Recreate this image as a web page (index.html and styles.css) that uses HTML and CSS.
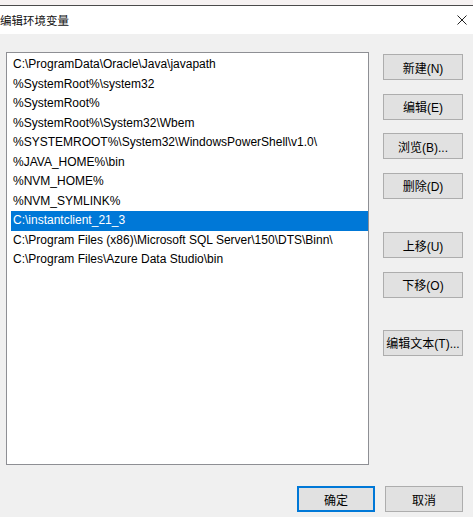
FILE: index.html
```html
<!DOCTYPE html>
<html lang="zh">
<head>
<meta charset="utf-8">
<title>编辑环境变量</title>
<link rel="stylesheet" href="styles.css">
</head>
<body>
<div class="window">
  <div class="topstrip"></div>
  <div class="titlebar">
    <span class="title">编辑环境变量</span>
    <svg class="close" width="10" height="10" viewBox="0 0 10 10"><path d="M0.5 0.5 L9.5 9.5 M9.5 0.5 L0.5 9.5" stroke="#222" stroke-width="1"/></svg>
  </div>
  <div class="content">
    <div class="list">
      <div class="row">C:\ProgramData\Oracle\Java\javapath</div>
      <div class="row">%SystemRoot%\system32</div>
      <div class="row">%SystemRoot%</div>
      <div class="row">%SystemRoot%\System32\Wbem</div>
      <div class="row">%SYSTEMROOT%\System32\WindowsPowerShell\v1.0\</div>
      <div class="row">%JAVA_HOME%\bin</div>
      <div class="row">%NVM_HOME%</div>
      <div class="row">%NVM_SYMLINK%</div>
      <div class="row selected">C:\instantclient_21_3</div>
      <div class="row">C:\Program Files (x86)\Microsoft SQL Server\150\DTS\Binn\</div>
      <div class="row">C:\Program Files\Azure Data Studio\bin</div>
    </div>
    <div class="side">
      <div class="btn">新建(N)</div>
      <div class="btn">编辑(E)</div>
      <div class="btn">浏览(B)...</div>
      <div class="btn">删除(D)</div>
      <div class="btn spaced">上移(U)</div>
      <div class="btn">下移(O)</div>
      <div class="btn spaced2">编辑文本(T)...</div>
    </div>
  </div>
  <div class="footer">
    <div class="btn primary">确定</div>
    <div class="btn">取消</div>
  </div>
</div>
</body>
</html>
```
FILE: styles.css
```css
html, body {
  margin: 0;
  padding: 0;
  background: #f0f0f0;
}
.window {
  width: 473px;
  height: 517px;
  overflow: hidden;
  background: #f0f0f0;
  font-family: "Liberation Sans", "Noto Sans CJK SC", sans-serif;
  font-size: 12px;
  color: #000;
}
.topstrip {
  height: 5px;
  background: #f6f2f2;
}
.titlebar {
  height: 28px;
  border-top: 1px solid #4b4b4b;
  background: #fff;
  display: flex;
  align-items: center;
  justify-content: space-between;
  padding: 0 6px 0 0;
}
.title {
  margin-left: 0;
  font-family: "Noto Sans CJK SC", sans-serif;
  font-size: 11.5px;
  color: #111;
}
.close {
  display: block;
}
.content {
  display: flex;
  align-items: flex-start;
  padding: 18px 10px 0 6px;
}
.list {
  height: 409px;
  width: 357px;
  border: 1px solid #8e8f94;
  background: #fff;
  padding: 2px 0 0 4px;
  box-sizing: content-box;
}
.row {
  height: 19.5px;
  line-height: 19.5px;
  padding-left: 2px;
  white-space: nowrap;
  overflow: hidden;
}
.row.selected {
  background: #0078d7;
  color: #fff;
}
.side {
  margin-left: 14px;
  margin-top: 2px;
  display: flex;
  flex-direction: column;
  gap: 13.5px;
}
.btn {
  width: 80px;
  height: 26px;
  box-sizing: border-box;
  border: 1px solid #adadad;
  background: #e1e1e1;
  display: flex;
  align-items: center;
  justify-content: center;
  font-family: "Liberation Sans", "Noto Sans CJK SC", sans-serif;
  font-size: 12px;
}
.btn.spaced {
  margin-top: 20px;
}
.btn.spaced2 {
  margin-top: 18.5px;
}
.footer {
  display: flex;
  justify-content: flex-end;
  gap: 10px;
  padding: 21px 10px 0 0;
}
.footer .btn {
  width: 78px;
}
.btn.primary {
  border: 2px solid #0078d7;
}
```
